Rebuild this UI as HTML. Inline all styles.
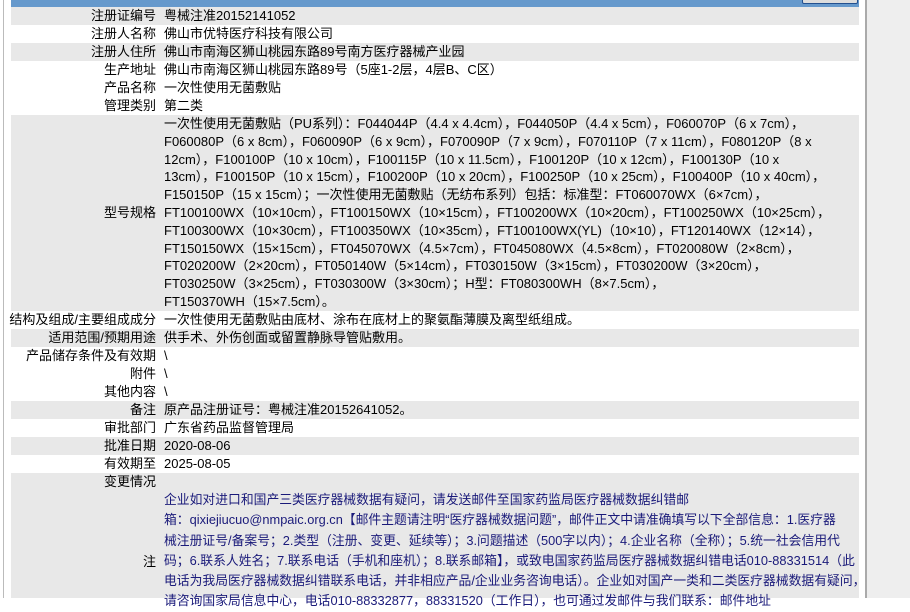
<!DOCTYPE html>
<html><head><meta charset="utf-8"><style>
*{margin:0;padding:0;box-sizing:border-box}
body{width:910px;height:598px;overflow:hidden;background:#fff;position:relative;font-family:"Liberation Sans","Noto Sans CJK SC",sans-serif;font-size:13px;color:#000}
.rb{position:absolute;left:865px;top:0;width:45px;height:598px;background:#eee;border-left:2px solid #aaa}
.lb{position:absolute;left:3px;top:0;width:1px;height:598px;background:#bbb}
.hd{position:absolute;left:11px;top:0;width:848px;height:7px;background:#6699cc}
.btn{position:absolute;left:802px;top:-4px;width:56px;height:8px;background:#ddd;border:1px solid #23508f;border-radius:2px}
.r{position:absolute;left:11px;width:848px;line-height:18px}
.g{background:#e8e8e8}
.l{position:absolute;right:703px;top:0;white-space:nowrap;text-align:right}
.v{position:absolute;left:153px;top:0;white-space:nowrap}
.n{color:#1a1a7a;line-height:20.3px;transform:scaleX(0.985);transform-origin:left top}
</style></head><body>
<div class="lb"></div><div class="rb"></div>
<div class="hd"></div><div class="btn"></div>
<div class="r g" style="top:7px;height:18px"><span class="l">注册证编号</span><span class="v">粤械注准20152141052</span></div>
<div class="r" style="top:25px;height:18px"><span class="l">注册人名称</span><span class="v">佛山市优特医疗科技有限公司</span></div>
<div class="r g" style="top:43px;height:18px"><span class="l">注册人住所</span><span class="v">佛山市南海区狮山桃园东路89号南方医疗器械产业园</span></div>
<div class="r" style="top:61px;height:18px"><span class="l">生产地址</span><span class="v">佛山市南海区狮山桃园东路89号（5座1-2层，4层B、C区）</span></div>
<div class="r" style="top:79px;height:18px"><span class="l">产品名称</span><span class="v">一次性使用无菌敷贴</span></div>
<div class="r" style="top:97px;height:18px"><span class="l">管理类别</span><span class="v">第二类</span></div>
<div class="r g" style="top:115px;height:196px"><span class="l" style="top:89px">型号规格</span><span class="v" style="line-height:17.8px">一次性使用无菌敷贴（PU系列）：F044044P（4.4 x 4.4cm），F044050P（4.4 x 5cm），F060070P（6 x 7cm），<br>F060080P（6 x 8cm），F060090P（6 x 9cm），F070090P（7 x 9cm），F070110P（7 x 11cm），F080120P（8 x<br>12cm），F100100P（10 x 10cm），F100115P（10 x 11.5cm），F100120P（10 x 12cm），F100130P（10 x<br>13cm），F100150P（10 x 15cm），F100200P（10 x 20cm），F100250P（10 x 25cm），F100400P（10 x 40cm），<br>F150150P（15 x 15cm）；一次性使用无菌敷贴（无纺布系列）包括：标准型：FT060070WX（6×7cm），<br>FT100100WX（10×10cm），FT100150WX（10×15cm），FT100200WX（10×20cm），FT100250WX（10×25cm），<br>FT100300WX（10×30cm），FT100350WX（10×35cm），FT100100WX(YL)（10×10），FT120140WX（12×14），<br>FT150150WX（15×15cm），FT045070WX（4.5×7cm），FT045080WX（4.5×8cm），FT020080W（2×8cm），<br>FT020200W（2×20cm），FT050140W（5×14cm），FT030150W（3×15cm），FT030200W（3×20cm），<br>FT030250W（3×25cm），FT030300W（3×30cm）；H型：FT080300WH（8×7.5cm），<br>FT150370WH（15×7.5cm）。</span></div>
<div class="r" style="top:311px;height:18px"><span class="l">结构及组成/主要组成成分</span><span class="v">一次性使用无菌敷贴由底材、涂布在底材上的聚氨酯薄膜及离型纸组成。</span></div>
<div class="r g" style="top:329px;height:18px"><span class="l">适用范围/预期用途</span><span class="v">供手术、外伤创面或留置静脉导管贴敷用。</span></div>
<div class="r" style="top:347px;height:18px"><span class="l">产品储存条件及有效期</span><span class="v">\</span></div>
<div class="r" style="top:365px;height:18px"><span class="l">附件</span><span class="v">\</span></div>
<div class="r" style="top:383px;height:18px"><span class="l">其他内容</span><span class="v">\</span></div>
<div class="r g" style="top:401px;height:18px"><span class="l">备注</span><span class="v">原产品注册证号：粤械注准20152641052。</span></div>
<div class="r" style="top:419px;height:18px"><span class="l">审批部门</span><span class="v">广东省药品监督管理局</span></div>
<div class="r g" style="top:437px;height:18px"><span class="l">批准日期</span><span class="v">2020-08-06</span></div>
<div class="r" style="top:455px;height:18px"><span class="l">有效期至</span><span class="v">2025-08-05</span></div>
<div class="r g" style="top:473px;height:125px"><span class="l">变更情况</span><span class="l" style="top:80px">注</span>
<span class="v n" style="top:17px">企业如对进口和国产三类医疗器械数据有疑问，请发送邮件至国家药监局医疗器械数据纠错邮<br>箱：qixiejiucuo@nmpaic.org.cn【邮件主题请注明“医疗器械数据问题”，邮件正文中请准确填写以下全部信息：1.医疗器<br>械注册证号/备案号；2.类型（注册、变更、延续等）；3.问题描述（500字以内）；4.企业名称（全称）；5.统一社会信用代<br>码；6.联系人姓名；7.联系电话（手机和座机）；8.联系邮箱】，或致电国家药监局医疗器械数据纠错电话010-88331514（此<br>电话为我局医疗器械数据纠错联系电话，并非相应产品/企业业务咨询电话）。企业如对国产一类和二类医疗器械数据有疑问，<br>请咨询国家局信息中心，电话010-88332877，88331520（工作日），也可通过发邮件与我们联系：邮件地址</span></div>
</body></html>
